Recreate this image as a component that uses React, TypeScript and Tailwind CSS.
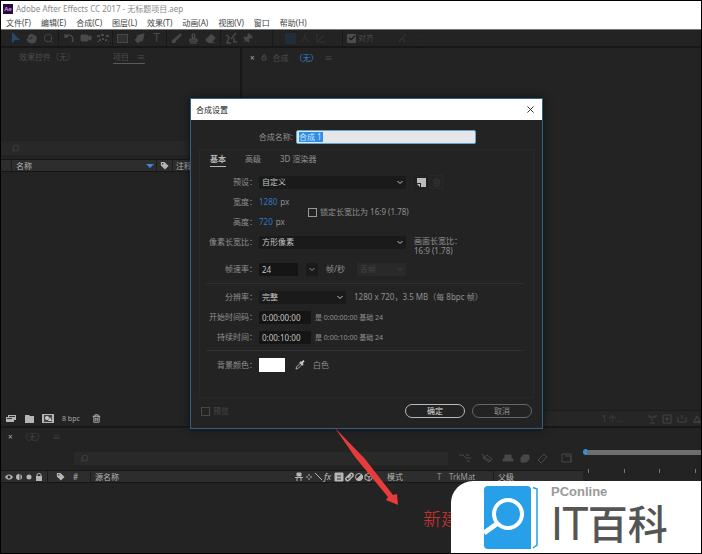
import { ReactNode } from "react";
import {
  Brush,
  Check,
  Eraser,
  Hand,
  PenTool,
  Pin,
  Search,
  Stamp,
  Trash2,
  Video,
  X,
} from "lucide-react";

const MENUS = ["文件(F)", "编辑(E)", "合成(C)", "图层(L)", "效果(T)", "动画(A)", "视图(V)", "窗口", "帮助(H)"];

function ToolButton({ label, children }: { label: string; children: ReactNode }) {
  return (
    <button type="button" aria-label={label} className="flex h-4 w-[17px] items-center justify-center">
      {children}
    </button>
  );
}

function Separator() {
  return <span className="mx-px h-4 w-px bg-[#191919]" />;
}

function Chevron({ className = "" }: { className?: string }) {
  return (
    <svg viewBox="0 0 8 5" className={`h-[5px] w-2 ${className}`} fill="none" stroke="currentColor">
      <path d="M1.5 1 4 3.5 6.5 1" />
    </svg>
  );
}

function TagIcon() {
  return (
    <svg viewBox="0 0 10 10" className="h-[9px] w-[9px] shrink-0">
      <path d="M1 1h4l4.5 4.5-4 4L1 5z" fill="#b5b5b5" />
      <circle cx="3" cy="3" r=".8" fill="#2d2d2d" />
    </svg>
  );
}

function Toolbar() {
  return (
    <div className="flex h-[17px] shrink-0 items-center border-t border-[#777] bg-[#232323] pl-[5px] text-[#4a4a4a]">
      <ToolButton label="选取工具">
        <svg viewBox="0 0 12 12" className="h-3 w-3">
          <path d="M3 0v11l3-3h5z" fill="#234a6b" />
        </svg>
      </ToolButton>
      <ToolButton label="手形工具">
        <Hand className="h-[11px] w-[11px] fill-current" />
      </ToolButton>
      <ToolButton label="缩放工具">
        <Search className="h-[11px] w-[11px]" />
      </ToolButton>
      <Separator />
      <ToolButton label="旋转工具">
        <svg viewBox="0 0 12 12" className="h-3 w-3" fill="none" stroke="currentColor" strokeWidth="1.4">
          <path d="M2 2v3h3M2 5c2-3 8-3 8 3l-1 2" />
        </svg>
      </ToolButton>
      <ToolButton label="摄像机工具">
        <Video className="h-3 w-3 fill-current" />
      </ToolButton>
      <ToolButton label="锚点工具">
        <svg viewBox="0 0 14 12" className="h-3 w-3.5" fill="currentColor">
          <path d="M1 3h3v2H1zM5 2h3v2H5zM10 3h3v2h-3zM3 7h2v2H3zM6 6h2v2H6zM9 7h2v2H9zM1 9h2v1H1zM12 9h1v1h-1z" />
        </svg>
      </ToolButton>
      <Separator />
      <ToolButton label="矩形工具">
        <span className="h-[9px] w-[11px] border border-[#484848] bg-[#303030]" />
      </ToolButton>
      <ToolButton label="钢笔工具">
        <PenTool className="h-[11px] w-[11px] -scale-x-100 fill-current" />
      </ToolButton>
      <ToolButton label="文字工具">
        <span className="text-xs leading-none">T</span>
      </ToolButton>
      <Separator />
      <ToolButton label="画笔工具">
        <Brush className="h-[11px] w-[11px] fill-current" />
      </ToolButton>
      <ToolButton label="仿制图章工具">
        <Stamp className="h-[11px] w-[11px]" strokeWidth={3} />
      </ToolButton>
      <ToolButton label="橡皮擦工具">
        <Eraser className="h-[11px] w-[11px] fill-current" />
      </ToolButton>
      <Separator />
      <ToolButton label="Roto 笔刷工具">
        <svg viewBox="0 0 12 12" className="h-3 w-3" fill="none" stroke="currentColor" strokeWidth="1.5">
          <path d="M11 1 6 7M1 3l3 2-2 6h4M9 6v4h3" />
        </svg>
      </ToolButton>
      <ToolButton label="人偶位置控点工具">
        <Pin className="h-[11px] w-[11px] rotate-45 fill-current" />
      </ToolButton>
      <span className="ml-4 h-4 w-px bg-[#191919]" />
      <span className="ml-3 mr-1 h-[11px] w-[11px] bg-[#232d36]" />
      <div className="flex items-center gap-1.5 text-[#343434]">
        <svg viewBox="0 0 10 10" className="h-2.5 w-2.5" fill="none" stroke="currentColor">
          <path d="M5 1v4L1 9M5 5l4 4" />
        </svg>
        <svg viewBox="0 0 10 10" className="h-2.5 w-2.5" fill="none" stroke="currentColor">
          <path d="M1 1v8h8M2 8l6-6" />
        </svg>
      </div>
      <span className="ml-4 mr-1 h-4 w-px bg-[#191919]" />
      <label className="flex items-center gap-0.5">
        <input type="checkbox" defaultChecked className="peer sr-only" />
        <span className="flex h-[9px] w-[9px] items-center justify-center rounded-[1px] bg-[#4d4d4d] text-[#1c1c1c]">
          <Check className="h-2 w-2" strokeWidth={4} />
        </span>
        对齐
      </label>
      <svg viewBox="0 0 26 10" className="ml-6 h-2.5 w-[26px]" fill="none">
        <path d="m1 9 3-4 3 4M5 4l3-3" stroke="#3a3a3a" />
        <path d="M16 3h3m3 0h3M16 8h3m3 0h3" stroke="#202d38" />
      </svg>
    </div>
  );
}

function ProjectPanel() {
  return (
    <section className="flex w-[241px] shrink-0 flex-col border-r-2 border-[#171717]">
      <div className="flex h-[21px] items-start gap-[38px] pl-[18px] text-[#4b4b4b]">
        <button type="button" className="pt-[5px] leading-none">效果控件（无）</button>
        <button type="button" className="flex gap-2 border-b border-[#5a5a5a] pb-0.5 pt-[5px] leading-none">
          项目 <span>≡</span>
        </button>
      </div>
      <div className="mt-[72px] flex h-[14px] items-center bg-[#282828] pl-2.5 text-[#444]">
        <Search className="h-[9px] w-[9px] -scale-x-100" />
        <input aria-label="搜索项目" className="min-w-0 flex-1 bg-transparent outline-none" />
      </div>
      <div className="mt-1 flex h-[13px] items-center border-y border-[#161616] bg-[#2d2d2d] text-[#b5b5b5]">
        <span className="ml-2.5 flex h-full flex-1 items-center border-l border-[#1c1c1c] pl-1">名称</span>
        <svg viewBox="0 0 8 4" className="mr-0.5 h-1 w-2">
          <path d="M0 0h8L4 4z" fill="#3f86dc" />
        </svg>
        <span className="flex h-full items-center border-x border-[#1c1c1c] px-[3px]">
          <TagIcon />
        </span>
        <span className="w-[67px] pl-[3px]">注释</span>
      </div>
      <div className="flex-1" />
      <div className="flex h-[15px] items-center gap-2 pl-1 text-[#aaa]">
        <button type="button" aria-label="解释素材">
          <svg viewBox="0 0 12 9" className="h-[9px] w-3">
            <path d="M3 1h8v5H9v2H1V3h2z" fill="#b5b5b5" />
            <path d="M2 4h5v1H2zM4 2h6v1H4z" fill="#333" />
          </svg>
        </button>
        <button type="button" aria-label="新建文件夹">
          <svg viewBox="0 0 9 8" className="h-2 w-[9px]">
            <path d="M0 0h4l1 1h4v7H0z" fill="#b5b5b5" />
          </svg>
        </button>
        <button type="button" aria-label="新建合成">
          <svg viewBox="0 0 12 9" className="h-[9px] w-3">
            <path d="M0 0h12v9H0z" fill="#b5b5b5" />
            <path d="M2 1h8v7H2z" fill="#444" />
            <circle cx="5" cy="4" r="2" fill="#ccc" />
            <path d="m6 7 2-4 2 4z" fill="#ccc" />
          </svg>
        </button>
        <button type="button" className="text-[7px]">8 bpc</button>
        <button type="button" aria-label="删除" className="ml-1">
          <Trash2 className="h-[9px] w-[9px]" strokeWidth={3} />
        </button>
      </div>
    </section>
  );
}

function ViewerPanel() {
  return (
    <section className="flex min-w-0 flex-1 flex-col">
      <div className="flex h-[19px] items-center gap-1.5 pl-2 text-[#4b4b4b]">
        <span className="text-[#aaa]">×</span>
        <svg viewBox="0 0 6 7" className="h-[7px] w-1.5" fill="none" stroke="currentColor">
          <path d="M1 3h4v3H1zM2 3V1h3" />
        </svg>
        <span>合成</span>
        <span className="text-[#3a83c9]">（无）</span>
        <span>≡</span>
      </div>
      <div className="flex-1" />
      <div className="flex h-4 items-center justify-end gap-2 border-t border-[#1c1c1c] bg-[#262626] text-[#444]">
        <span className="mr-4">1 个...</span>
        <svg viewBox="0 0 54 10" className="h-2.5 w-[54px]" fill="none" stroke="currentColor">
          <path d="M2 1v2h7V1M3 9h5M5 4v3M16 1h8v8h-8zM18 5h4M20 3v4M31 3v5h8V3M35 1v4M47 8l3-6 3 6zM46 8h8" />
        </svg>
      </div>
    </section>
  );
}

function Timeline() {
  return (
    <section className="flex h-[127px] shrink-0 border-t-2 border-[#171717]">
      <div className="flex w-[582px] shrink-0 flex-col">
        <div className="flex h-[18px] items-center gap-2 pl-[7px] text-[#444]">
          <span className="text-[#aaa]">×</span>
          <span>（无）</span>
          <span>≡</span>
        </div>
        <div className="mt-1 flex h-4 items-center text-[#484848]">
          <div className="ml-[73px] flex h-[13px] w-[374px] items-center bg-[#292929] pl-1.5">
            <Search className="h-[9px] w-[9px] -scale-x-100" />
            <input aria-label="搜索图层" className="min-w-0 flex-1 bg-transparent outline-none" />
          </div>
          <svg viewBox="0 0 120 12" className="ml-2.5 h-3 w-[120px]" fill="none" stroke="currentColor">
            <path d="M1 3h4l3 3h5M8 3h3M9 9h3M24 2l3 4 6 3M25 6l6 4 3-3-5-4z" />
            <path d="M45 9c0-3 2-4 5-4s5 1 5 4zM47 3h6v3h-6z" fill="currentColor" />
            <path d="M63 5h6v5h-6zM65 3h6v5h-6z" fill="currentColor" />
            <path d="m80 8 6-6 3 3-6 6zM104 2h9v8h-9zM107 4h6v6" />
          </svg>
        </div>
        <div className="mt-1 flex h-[13px] items-center border-y border-[#161616] bg-[#2d2d2d] text-[#b5b5b5]">
          <svg viewBox="0 0 38 8" className="ml-1 h-2 w-[38px]">
            <path d="M0 4c2-3.5 6-3.5 8 0-2 3.5-6 3.5-8 0" fill="#b5b5b5" />
            <circle cx="4" cy="4" r="1.5" fill="#222" />
            <circle cx="14" cy="4" r="3" fill="#b5b5b5" />
            <path d="M15 1v6" stroke="#333" />
            <circle cx="24" cy="4" r="2.5" fill="#b5b5b5" />
            <path d="M31 3h6v5h-6z" fill="#b5b5b5" />
            <path d="M32 4V2q0-1.500 2-1.500T36 2v2" fill="none" stroke="#b5b5b5" />
          </svg>
          <span className="ml-1 mr-2 flex h-full items-center border-l border-[#1c1c1c] pl-2">
            <TagIcon />
          </span>
          <span className="flex h-full w-[17px] items-center">#</span>
          <span className="flex h-full flex-1 items-center border-l border-[#1c1c1c] pl-1">源名称</span>
          <svg viewBox="0 0 78 10" className="mr-3.5 h-2.5 w-[78px] overflow-visible" fill="none" stroke="#b5b5b5">
            <path d="M2 1h4v3H2z" fill="#b5b5b5" />
            <path d="M0 5.5h8M2 6v3M6 6v3M14 2v2M14 6v2M11 5h2M15 5h2M20 1l7 7" />
            <text x="29" y="8" fontSize="9" fontStyle="italic" stroke="none" fill="#b5b5b5">fx</text>
            <path d="M40 1h8v8h-8z" fill="#b5b5b5" />
            <path d="M42 4h4M42 7h4" stroke="#333" />
            <path d="m51 6 4-4c2-2 4 1 3 2l-4 4c-2 2-4-1-3-2M53 6l3-3" strokeWidth="1.5" />
            <circle cx="64" cy="5" r="3.5" />
            <path d="M61.5 7.5a3.500 3.500 0 0 0 5-5z" fill="#b5b5b5" />
            <path d="m70 3 4-2 3 2v4l-3 2-4-2zM70 3l4 2 3-2M74 5v4" />
          </svg>
          <span className="w-[50px]">模式</span>
          <span className="w-3 text-[#888]">T</span>
          <span className="w-[44px] text-[#999]">TrkMat</span>
          <span className="flex h-full w-[90px] items-center border-l border-[#1c1c1c] pl-1">父级</span>
        </div>
      </div>
      <div className="flex min-w-0 flex-1 flex-col pt-[21px]">
        <div className="flex items-center">
          <span className="h-1.5 w-1 rounded-l-full bg-[#2f8fdc]" />
          <span className="h-[5px] flex-1 bg-[#6e6e6e]" />
        </div>
        <div className="mt-3.5 flex justify-between px-[5px]">
          {[0, 1, 2, 3].map((tick) => (
            <span key={tick} className="h-1 w-px bg-[#777]" />
          ))}
        </div>
      </div>
    </section>
  );
}

interface SelectFieldProps {
  id: string;
  value: string;
  width: string;
  disabled?: boolean;
}

function SelectField({ id, value, width, disabled }: SelectFieldProps) {
  return (
    <div className={`relative flex h-[13px] items-center ${width} ${disabled ? "bg-[#292929] text-[#444]" : "bg-[#1a1a1a] text-[#c4c4c4]"}`}>
      <select id={id} aria-label={value} disabled={disabled} className="h-full w-full appearance-none bg-transparent pl-[3px] leading-none outline-none">
        <option>{value}</option>
      </select>
      <Chevron className="pointer-events-none absolute right-0.5" />
    </div>
  );
}

function Row({ label, htmlFor, children }: { label: string; htmlFor?: string; children: ReactNode }) {
  return (
    <div className="flex h-5 items-center">
      <label htmlFor={htmlFor} className="mr-0.5 w-[55px] shrink-0 whitespace-nowrap text-right">{label}</label>
      {children}
    </div>
  );
}

function SettingsDialog() {
  const field = "h-[13px] bg-[#151515] px-[3px] text-[#c4c4c4] outline-none";

  return (
    <div
      role="dialog"
      aria-label="合成设置"
      className="absolute left-[189px] top-[97px] w-[353px] border border-[#32617f] bg-[#232323] text-[#909090] shadow-[0_0_8px_#0a1218]"
    >
      <div className="flex h-[21px] items-center justify-between bg-white pl-[5px] pr-1.5 text-[#222]">
        <h1>合成设置</h1>
        <button type="button" aria-label="关闭">
          <X className="h-[11px] w-[11px]" strokeWidth={2} />
        </button>
      </div>
      <div className="flex h-[29px] items-center pt-1">
        <label htmlFor="name" className="mr-[3px] w-[102px] text-right">合成名称:</label>
        <div className="flex h-3.5 w-[180px] items-center rounded-[2px] border border-[#5fa5d8] bg-[#e6e6e8] px-0.5">
          <input
            id="name"
            defaultValue="合成 1"
            className="h-[10px] w-6 bg-[#2f8de4] text-[#cfe6fa] outline-none"
          />
        </div>
      </div>

      <div className="mx-2 h-[249px] border border-[#292929] pl-0.5 pr-2.5">
        <div role="tablist" className="flex h-[22px] items-start gap-[19px] pl-2">
          <button type="button" role="tab" aria-selected="true" className="border-b border-[#b5b5b5] pb-[3px] pt-[5px] font-bold leading-none text-[#b5b5b5]">基本</button>
          <button type="button" role="tab" aria-selected="false" className="pt-[5px] leading-none">高级</button>
          <button type="button" role="tab" aria-selected="false" className="pt-[5px] leading-none">3D 渲染器</button>
        </div>
        <Row label="预设：" htmlFor="preset">
          <SelectField id="preset" value="自定义" width="w-[147px]" />
          <button type="button" aria-label="保存预设" className="ml-2 flex h-3.5 w-3.5 items-center justify-center border border-[#1d1d1d]">
            <svg viewBox="0 0 9 9" className="h-[9px] w-[9px]">
              <path d="M0 0h9v9H4V5H0z" fill="#bbb" />
              <path d="M0 6h3v3z" fill="#bbb" />
            </svg>
          </button>
          <button type="button" disabled aria-label="删除预设" className="ml-px flex h-3.5 w-3.5 items-center justify-center border border-[#292929] text-[#3a3a3a]">
            <Trash2 className="h-[9px] w-[9px]" />
          </button>
        </Row>
        <div className="flex items-center">
          <div className="w-[106px]">
            <Row label="宽度：">
              <button type="button" className="mr-[3px] text-[#2e79c0]">1280</button>px
            </Row>
            <Row label="高度：">
              <button type="button" className="mr-[3px] text-[#2e79c0]">720</button>px
            </Row>
          </div>
          <label className="flex items-center gap-[3px] whitespace-nowrap">
            <input type="checkbox" className="h-[9px] w-[9px] appearance-none border border-[#999]" />
            锁定长宽比为 16:9 (1.78)
          </label>
        </div>
        <Row label="像素长宽比：" htmlFor="pixel">
          <SelectField id="pixel" value="方形像素" width="w-[147px]" />
          <p className="ml-2 whitespace-nowrap pt-2 leading-[10px]">
            画面长宽比：
            <br />
            16:9 (1.78)
          </p>
        </Row>
        <div className="mt-[7px]">
          <Row label="帧速率：" htmlFor="rate">
            <input id="rate" defaultValue="24" className={`w-[39px] ${field}`} />
            <button type="button" aria-label="选择帧速率" className="ml-2 mr-2 flex h-[13px] w-3 items-center justify-center bg-[#1a1a1a]">
              <Chevron />
            </button>
            <span className="mr-3">帧/秒</span>
            <SelectField id="drop" value="丢帧" width="w-[49px]" disabled />
          </Row>
        </div>
        <hr className="mb-[3px] ml-1 mt-1 border-[#303030]" />
        <Row label="分辨率：" htmlFor="resolution">
          <SelectField id="resolution" value="完整" width="w-[87px]" />
          <span className="ml-2 whitespace-nowrap">1280 x 720，3.5 MB（每 8bpc 帧）</span>
        </Row>
        <Row label="开始时间码：" htmlFor="start">
          <input id="start" defaultValue="0:00:00:00" className={`w-[52px] ${field}`} />
          <span className="ml-1 whitespace-nowrap text-[7px]">是 0:00:00:00 基础 24</span>
        </Row>
        <Row label="持续时间：" htmlFor="duration">
          <input id="duration" defaultValue="0:00:10:00" className={`w-[52px] ${field}`} />
          <span className="ml-1 whitespace-nowrap text-[7px]">是 0:00:10:00 基础 24</span>
        </Row>
        <hr className="mb-1 ml-1 mt-[3px] border-[#303030]" />
        <Row label="背景颜色：">
          <button type="button" aria-label="背景颜色" className="h-3.5 w-[26px] bg-white" />
          <button type="button" aria-label="吸管" className="ml-2.5 mr-2">
            <svg viewBox="0 0 10 10" className="h-2.5 w-2.5">
              <path d="m1 9 .5-2L6 2.5 7.5 4 3 8.500z" fill="none" stroke="#aaa" />
              <path d="M5 2 8 5M6.5 3 9 .8" stroke="#c8c8c8" strokeWidth="2" />
            </svg>
          </button>
          白色
        </Row>
      </div>

      <div className="flex items-center gap-[7px] px-2.5 pb-2.5 pt-1.5">
        <label className="mr-auto flex items-center gap-[3px] text-[#484848]">
          <input type="checkbox" disabled className="h-[9px] w-[9px] appearance-none border border-[#484848]" />
          预览
        </label>
        <button type="button" className="flex h-3.5 w-[60px] items-center justify-center rounded-full border border-[#b8b8b8] text-[#ddd]">确定</button>
        <button type="button" className="flex h-3.5 w-[60px] items-center justify-center rounded-full border border-[#666]">取消</button>
      </div>
    </div>
  );
}

function Watermark() {
  return (
    <div className="absolute bottom-0 right-0 flex h-[72px] w-[250px] rounded-tl-[22px] bg-white pl-8 pt-1">
      <svg viewBox="0 0 60 64" className="h-16 w-[60px] shrink-0">
        <path d="M5 1h39q4 0 4 4v59H5q-4 0-4-4V5q0-4 4-4" fill="#279fe9" />
        <path d="M50 2.500 54 4v56l-4 3" fill="none" stroke="#279fe9" strokeWidth="1.5" />
        <circle cx="25" cy="29" r="14" fill="none" stroke="#fff" strokeWidth="4" />
        <path d="M15 38 1 48" stroke="#fff" strokeWidth="5" />
      </svg>
      <div className="ml-2 whitespace-nowrap">
        <p className="font-['Liberation_Sans',sans-serif] text-[13px] font-bold leading-[14px] text-[#9a9a9a]">PConline</p>
        <p className="flex items-center font-['DejaVu_Sans_Condensed','Noto_Sans_CJK_SC',sans-serif] leading-[52px] text-[#555]">
          <span className="text-[45px]">IT</span>
          <span className="text-[40px] font-medium">百科</span>
        </p>
      </div>
    </div>
  );
}

export default function App() {
  return (
    <main className="relative flex min-h-screen flex-col overflow-hidden border border-black bg-[#232323] font-['Noto_Sans','Noto_Sans_CJK_SC',sans-serif] text-[8px] leading-none">
      <header className="bg-white">
        <div className="flex h-[15px] items-center gap-[3px] pl-0.5 text-[#8a8a8a]">
          <span className="flex h-2.5 w-2.5 items-center justify-center bg-[#2b0a3d] text-[6px] font-bold text-[#c58cf0]">Ae</span>
          Adobe After Effects CC 2017 - 无标题项目.aep
        </div>
        <nav className="flex h-[13px] items-center gap-2.5 pl-[5px] text-[#444]">
          {MENUS.map((menu) => (
            <button key={menu} type="button" className="whitespace-nowrap">{menu}</button>
          ))}
        </nav>
      </header>
      <Toolbar />
      <div className="flex min-h-0 flex-1 border-t-2 border-[#171717]">
        <ProjectPanel />
        <ViewerPanel />
      </div>
      <Timeline />
      <SettingsDialog />
      <svg viewBox="0 0 64 78" className="absolute left-[334px] top-[427px] h-[78px] w-16">
        <path d="M0 0 30 31 58 67 62 66 63 77 51 72 53 69 20 29z" fill="#e83c3c" />
      </svg>
      <p className="absolute left-[422px] top-[509px] text-lg font-light leading-none text-[#d83434]">新建</p>
      <Watermark />
    </main>
  );
}
